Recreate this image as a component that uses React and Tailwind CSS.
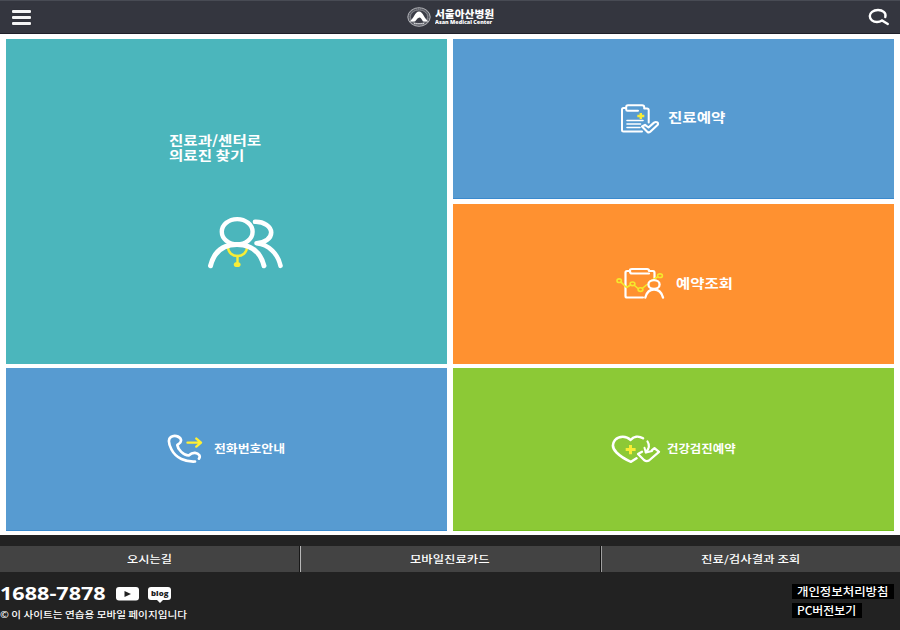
import React from 'react';

// Wide label: glyphs are widened from the left edge of the box.
function Wide({ className = '', children }) {
  return <span className={`block origin-left whitespace-nowrap ${className}`}>{children}</span>;
}

function Emblem() {
  return (
    <svg className="h-[20px] w-[24px] shrink-0" viewBox="0 0 24 20" fill="none">
      <ellipse cx="12" cy="10" rx="11.2" ry="9.3" fill="#6d6f77" stroke="#b9babe" strokeWidth="0.9" />
      <ellipse cx="12" cy="10" rx="9.8" ry="8" stroke="#4a4c55" strokeWidth="1" strokeDasharray="1.2 1" />
      <ellipse cx="12" cy="9.8" rx="8.6" ry="6.8" fill="#3b3d47" stroke="#a5a6aa" strokeWidth="0.5" />
      <path d="M2.4 14.600 C6.500 12.500 8 4.600 12 4.600 C16 4.600 17.500 12.500 21.600 14.600 L16 14.600 C14.800 12.500 13.800 10.500 12.400 10.500 C11 10.500 9.500 12.800 8 14.600 Z" fill="#fff" />
      <path d="M7 16.700 H17" stroke="#d0d1d4" strokeWidth="1.3" strokeDasharray="1.6 0.5" />
    </svg>
  );
}

function DoctorsIcon() {
  return (
    <svg className="h-[54px] w-[78px]" viewBox="0 0 78 54" fill="none" strokeLinecap="round">
      <path d="M22 29 V31 C22 43 41 43 41 31 V29" stroke="#f8ed35" strokeWidth="2.4" />
      <path d="M31.5 40 V46" stroke="#f8ed35" strokeWidth="2.4" />
      <ellipse cx="31.200" cy="48.500" rx="3.400" ry="2.600" fill="#f8ed35" />
      <ellipse cx="31.200" cy="15.800" rx="15.400" ry="12.700" stroke="#fff" strokeWidth="4.400" />
      <path d="M4.500 49.800 C8 36 17 28.500 31 28.500 C45 28.500 54.500 36 58 49.800" stroke="#fff" strokeWidth="5" />
      <path d="M49 5.800 C58 5.500 65.200 10.500 65.200 16.500 C65.200 22.500 59 26.600 50.500 27.200 C63 28.500 72 38 74.500 49.800" stroke="#fff" strokeWidth="4.600" strokeLinejoin="round" />
    </svg>
  );
}

function ReservationIcon() {
  return (
    <svg className="h-[32px] w-[40px]" viewBox="0 0 40 32" fill="none" stroke="#fff" strokeWidth="2" strokeLinecap="round" strokeLinejoin="round">
      <path d="M6 4 H3.500 Q2 4 2 5.500 V26 Q2 27.500 3.500 27.500 H22" />
      <path d="M18 6.800 H7.500 Q6.200 6.800 6.200 5.500 V3 Q6.200 1.200 8 1.200 H22 Q24.200 1.200 24.200 3 V4.500 H27 Q28.700 4.500 28.700 6 V18.500" />
      <path d="M20.800 9 V15 M17.300 12 H24.300" stroke="#f8ed35" strokeWidth="2.400" strokeLinecap="butt" />
      <path d="M7 16.500 H23 M7 20 H20.500 M7 23.500 H20" strokeWidth="1.600" />
      <path d="M22 22.500 L25 20.800 L28.500 23.500 L34 18.600 C36.500 17 39.200 19 37.500 21 L30 28 Q28.800 28.800 27.500 28 Z" strokeWidth="2.100" />
    </svg>
  );
}

function LookupIcon() {
  return (
    <svg className="h-[33px] w-[49px]" viewBox="0 0 49 33" fill="none" strokeLinecap="round" strokeLinejoin="round">
      <path d="M14 4 H11 Q9.500 4 9.500 5.500 V29 Q9.500 30.500 11 30.500 H27" stroke="#fff" strokeWidth="2.200" />
      <path d="M33 6.500 H16 Q14 6.500 14 4.500 V3 Q14 2 16 2 H31 Q33 2 33 3.500 V4 H37 Q38.500 4 38.500 6 V11" stroke="#fff" strokeWidth="2.200" />
      <path d="M5 15.200 L10.500 20.500 L14.500 18 M18.500 18.500 L22 21.500 M26.200 21.500 L31 17.500 M34 14.500 L41.500 10" stroke="#f5e82c" strokeWidth="1.600" />
      <ellipse cx="3.200" cy="13.700" rx="2.200" ry="1.800" stroke="#f5e82c" strokeWidth="1.600" />
      <ellipse cx="16.500" cy="16.800" rx="2.400" ry="1.800" stroke="#f5e82c" strokeWidth="1.600" />
      <ellipse cx="24.500" cy="22.600" rx="2.400" ry="1.800" stroke="#f5e82c" strokeWidth="1.600" />
      <ellipse cx="44" cy="8.700" rx="2.400" ry="1.800" stroke="#f5e82c" strokeWidth="1.600" />
      <ellipse cx="38" cy="17.500" rx="5.600" ry="4.400" stroke="#fff" strokeWidth="2.300" />
      <path d="M29.300 30.500 C31 24 34 22.500 38 22.500 C42.500 22.500 45.500 25 47 30.500" stroke="#fff" strokeWidth="2.400" />
    </svg>
  );
}

function PhoneIcon() {
  return (
    <svg className="h-[31px] w-[37px]" viewBox="0 0 37 31" fill="none" strokeLinecap="round" strokeLinejoin="round">
      <path d="M28 27.500 C18.500 28 9 24.300 4.500 15.500 C2 10.500 0.500 5.500 3.700 3.200 C7 0.700 12.500 2 13.800 5.300 C15 8.500 12.500 9.500 10.300 11 C10.800 15.500 16.500 21.300 21.700 21.500 C23.500 19.800 25 18.600 28 18.800 C32 19.300 33.800 22.300 32 24.600" stroke="#fff" strokeWidth="2.700" />
      <path d="M20.500 8.600 H33 M29.300 4.600 L34 8.600 L29.300 12.600" stroke="#fff035" strokeWidth="2.400" />
    </svg>
  );
}

function HeartIcon() {
  return (
    <svg className="h-[29px] w-[50px]" viewBox="0 0 50 29" fill="none" strokeLinecap="round" strokeLinejoin="round">
      <path d="M32 3.300 C27.500 0.500 22.500 1.500 19.500 5 C15.500 0.800 8 0.800 4 5 C0.500 9.500 2 14 5.500 17.500 C10 22 14.500 24.500 20 26.800 L25.500 23.300" stroke="#fff" strokeWidth="2.500" />
      <path d="M19.500 10 V19.200 M14.700 14.500 H24.600" stroke="#f8ed35" strokeWidth="3" strokeLinecap="butt" />
      <path d="M36.500 6.500 C38.800 10 38 14 34.800 17.300" stroke="#fff" strokeWidth="2.200" />
      <path d="M33.500 12.800 L34.800 17.500 L41 16" stroke="#fff" strokeWidth="2" />
      <path d="M31 16.800 L27 19 L33 25 Q35.500 27 38 25.500 L48 16.800 L43.500 13.200 L41 15.200" stroke="#fff" strokeWidth="2.300" />
    </svg>
  );
}

function Header() {
  return (
    <header className="flex h-[34px] items-start justify-between border-t border-b border-t-[#484b54] border-b-[#1e1f29] bg-[#34363f]">
      <div className="flex w-[100px] pt-[9px] pl-[12px]">
        <div className="flex flex-col gap-[3px]">
          <i className="h-[3px] w-[19px] rounded-[1px] bg-[#f4f4f5] shadow-[0_0_1px_#1c1d26]" />
          <i className="h-[3px] w-[19px] rounded-[1px] bg-[#f4f4f5] shadow-[0_0_1px_#1c1d26]" />
          <i className="h-[3px] w-[19px] rounded-[1px] bg-[#f4f4f5] shadow-[0_0_1px_#1c1d26]" />
        </div>
      </div>
      <div className="flex gap-[4px] pt-[6px] pl-px">
        <Emblem />
        <div className="w-[60px] pt-[2px] text-white">
          <Wide className="scale-x-[1.020] text-[10.500px] leading-[10px] font-black">서울아산병원</Wide>
          <Wide className="scale-x-[1.020] font-['Open_Sans'] text-[5.300px] leading-[7px] font-extrabold">Asan Medical Center</Wide>
        </div>
      </div>
      <div className="flex w-[100px] justify-end pt-[7px] pr-[10px]">
        <svg className="h-[18px] w-[22px]" viewBox="0 0 22 18" fill="none" stroke="#fff" strokeWidth="2.400" strokeLinecap="round">
          <path d="M17.300 9 C18.500 4.500 14.500 2 10 2 C5 2 1.800 5 1.800 8 C1.800 11.500 5 14 9 14 C11 14 12.500 13.500 14 12.500 L19.800 16" />
        </svg>
      </div>
    </header>
  );
}

export default function App() {
  return (
    <div className="flex h-[630px] w-[900px] flex-col overflow-hidden bg-white font-['Noto_Sans_CJK_KR',sans-serif]">
      <Header />
      <main className="grid h-[501px] grid-cols-[441px_441px] gap-x-[6px] px-[6px] pt-[5px]">
        <div className="flex flex-col gap-[4px]">
          <a className="block h-[325px] bg-[#4bb6bc] pt-[93px] pl-[163px]">
            <Wide className="scale-x-[1.200] text-[13px] leading-[15px] font-bold text-white">진료과/센터로</Wide>
            <Wide className="scale-x-[1.200] text-[13px] leading-[15px] font-bold text-white">의료진 찾기</Wide>
            <div className="pt-[54px] pl-[37px]"><DoctorsIcon /></div>
          </a>
          <a className="flex h-[163px] gap-[10px] border-b border-[#3a8ace] bg-[#579bd1] pt-[66px] pl-[161px]">
            <PhoneIcon />
            <Wide className="scale-x-[1.170] pt-[6px] text-[11px] leading-[16px] font-bold text-white">전화번호안내</Wide>
          </a>
        </div>
        <div className="flex flex-col">
          <a className="flex h-[160px] gap-[8px] border-b border-[#3a8ace] bg-[#579bd1] pt-[65px] pl-[167px]">
            <ReservationIcon />
            <Wide className="scale-x-[1.200] pt-[4px] text-[13px] leading-[18px] font-bold text-white">진료예약</Wide>
          </a>
          <a className="mt-[5px] flex h-[160px] gap-[11px] bg-[#ff9130] pt-[63px] pl-[163px]">
            <LookupIcon />
            <Wide className="scale-x-[1.190] pt-[7px] text-[13px] leading-[18px] font-bold text-white">예약조회</Wide>
          </a>
          <a className="mt-[4px] flex h-[163px] gap-[6px] border-b border-[#72bc1f] bg-[#8cc936] pt-[67px] pl-[158px]">
            <HeartIcon />
            <Wide className="scale-x-[1.130] pt-[5px] text-[11px] leading-[16px] font-bold text-white">건강검진예약</Wide>
          </a>
        </div>
      </main>
      <footer className="h-[95px] bg-[#222222] pt-[11px]">
        <nav className="flex h-[26px] bg-[#434343] text-[10px] leading-[25px] font-medium text-white">
          <div className="w-[300px] border-r border-[#181818] pl-[127px]"><Wide className="scale-x-[1.220]">오시는길</Wide></div>
          <div className="w-[301px] border-r border-l border-r-[#111] border-l-[#b8b8b8] pl-[109px]"><Wide className="scale-x-[1.235]">모바일진료카드</Wide></div>
          <div className="w-[299px] border-l border-[#a0a0a0] pl-[99px]"><Wide className="scale-x-[1.245]">진료/검사결과 조회</Wide></div>
        </nav>
        <div className="flex justify-between">
          <div className="pt-[12px] text-white">
            <div className="flex h-[22px]">
              <div className="w-[116px]"><Wide className="scale-x-[1.270] font-['Open_Sans'] text-[17px] leading-[20px] font-bold">1688-7878</Wide></div>
              <svg className="mt-[3px] h-[14px] w-[23px]" viewBox="0 0 23 14">
                <rect width="23" height="13.500" rx="3" fill="#fff" />
                <path d="M8.500 4 L15 7 L8.500 10 Z" fill="#222" />
              </svg>
              <div className="mt-[3px] ml-[9px] flex h-[16px] w-[23px] flex-col items-center">
                <div className="flex h-[13px] w-[23px] justify-center rounded-[3px] bg-white font-['Open_Sans'] text-[7px] leading-[13px] font-extrabold text-[#222]"><span className="scale-x-[1.120]">blog</span></div>
                <i className="border-x-[3px] border-t-[3px] border-x-transparent border-t-white" />
              </div>
            </div>
            <Wide className="scale-x-[1.180] text-[9px] leading-[17px] font-medium">© 이 사이트는 연습용 모바일 페이지입니다</Wide>
          </div>
          <div className="w-[109px] pt-[12px] text-[11px] leading-[14px] font-medium text-white">
            <div className="ml-px h-[15px] w-[102px] bg-black pl-[5px]"><Wide className="scale-x-[1.130]">개인정보처리방침</Wide></div>
            <div className="mt-[4px] ml-px h-[15px] w-[70px] bg-black pl-[5px]"><Wide className="scale-x-[1.080]">PC버전보기</Wide></div>
          </div>
        </div>
      </footer>
    </div>
  );
}
